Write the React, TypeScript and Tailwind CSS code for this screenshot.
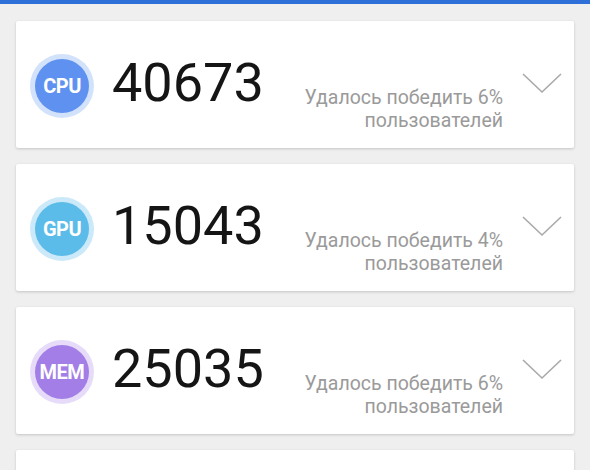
const rows = [
  { label: "CPU", score: "40673", pct: "6%", ring: "bg-[#d3e2fb]", fill: "bg-[#5f91f0]" },
  { label: "GPU", score: "15043", pct: "4%", ring: "bg-[#cbe9f8]", fill: "bg-[#5bbbe9]" },
  { label: "MEM", score: "25035", pct: "6%", ring: "bg-[#e6dcf9]", fill: "bg-[#a37ee6]" },
];

function Chevron() {
  return (
    <svg width="40" height="21" viewBox="0 0 40 21" fill="none">
      <path d="M1 1 L20 19 L39 1" stroke="#a9a9a9" strokeWidth="1.6" />
    </svg>
  );
}

export default function App() {
  return (
    <div className="w-[590px] h-[470px] overflow-hidden bg-[#efefef] font-['Roboto',sans-serif]">
      {/* Полоса сверху */}
      <div className="h-[4px] bg-[#2f6fd8]" />
      <div className="flex flex-col gap-[16px] px-[16px] pt-[17px]">
        {rows.map((r) => (
          <div
            key={r.label}
            className="h-[127px] shrink-0 bg-white rounded-[2px] shadow-[0_1px_3px_rgba(0,0,0,0.18)] flex items-center pl-[14px] pr-[12px]"
          >
            <div className={`w-[64px] h-[64px] rounded-full ${r.ring} flex items-center justify-center mt-[3px]`}>
              <div className={`w-[54px] h-[54px] rounded-full ${r.fill} flex items-center justify-center text-white font-bold text-[20px] tracking-[-0.5px]`}>
                {r.label}
              </div>
            </div>
            <div className="ml-[18px] text-[54px] text-[#151515] leading-none mb-[4px]">{r.score}</div>
            <div className="flex-1 text-right text-[19.5px] leading-[23px] text-[#9a9a9a] mt-[48px]">
              Удалось победить {r.pct}
              <br />
              пользователей
            </div>
            <div className="ml-[19px] mb-[3px]">
              <Chevron />
            </div>
          </div>
        ))}
        <div className="h-[127px] shrink-0 bg-white rounded-[2px] shadow-[0_1px_3px_rgba(0,0,0,0.18)]" />
      </div>
    </div>
  );
}
